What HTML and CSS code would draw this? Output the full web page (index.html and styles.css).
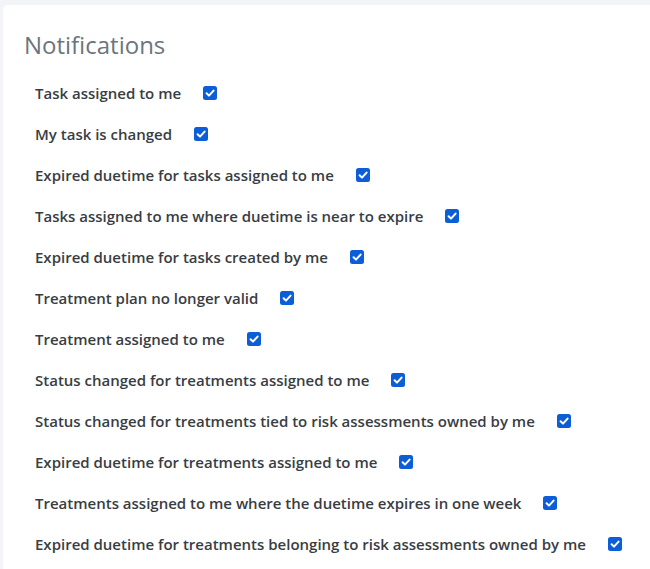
FILE: index.html
```html
<!DOCTYPE html>
<html>
<head>
<meta charset="utf-8">
<link rel="stylesheet" href="styles.css">
</head>
<body>
<div class="card">
  <h2 class="title">Notifications</h2>
  <ul class="list">
    <li class="row"><span class="label">Task assigned to me</span><span class="check"><svg viewBox="0 0 14 14" width="14" height="14"><rect width="14" height="14" rx="2.5" fill="#0b5ed7"/><path d="M3.6 7.2 L6 9.6 L10.6 4.6" fill="none" stroke="#fff" stroke-width="2" stroke-linecap="round" stroke-linejoin="round"/></svg></span></li>
    <li class="row"><span class="label">My task is changed</span><span class="check"><svg viewBox="0 0 14 14" width="14" height="14"><rect width="14" height="14" rx="2.5" fill="#0b5ed7"/><path d="M3.6 7.2 L6 9.6 L10.6 4.6" fill="none" stroke="#fff" stroke-width="2" stroke-linecap="round" stroke-linejoin="round"/></svg></span></li>
    <li class="row"><span class="label">Expired duetime for tasks assigned to me</span><span class="check"><svg viewBox="0 0 14 14" width="14" height="14"><rect width="14" height="14" rx="2.5" fill="#0b5ed7"/><path d="M3.6 7.2 L6 9.6 L10.6 4.6" fill="none" stroke="#fff" stroke-width="2" stroke-linecap="round" stroke-linejoin="round"/></svg></span></li>
    <li class="row"><span class="label">Tasks assigned to me where duetime is near to expire</span><span class="check"><svg viewBox="0 0 14 14" width="14" height="14"><rect width="14" height="14" rx="2.5" fill="#0b5ed7"/><path d="M3.6 7.2 L6 9.6 L10.6 4.6" fill="none" stroke="#fff" stroke-width="2" stroke-linecap="round" stroke-linejoin="round"/></svg></span></li>
    <li class="row"><span class="label">Expired duetime for tasks created by me</span><span class="check"><svg viewBox="0 0 14 14" width="14" height="14"><rect width="14" height="14" rx="2.5" fill="#0b5ed7"/><path d="M3.6 7.2 L6 9.6 L10.6 4.6" fill="none" stroke="#fff" stroke-width="2" stroke-linecap="round" stroke-linejoin="round"/></svg></span></li>
    <li class="row"><span class="label">Treatment plan no longer valid</span><span class="check"><svg viewBox="0 0 14 14" width="14" height="14"><rect width="14" height="14" rx="2.5" fill="#0b5ed7"/><path d="M3.6 7.2 L6 9.6 L10.6 4.6" fill="none" stroke="#fff" stroke-width="2" stroke-linecap="round" stroke-linejoin="round"/></svg></span></li>
    <li class="row"><span class="label">Treatment assigned to me</span><span class="check"><svg viewBox="0 0 14 14" width="14" height="14"><rect width="14" height="14" rx="2.5" fill="#0b5ed7"/><path d="M3.6 7.2 L6 9.6 L10.6 4.6" fill="none" stroke="#fff" stroke-width="2" stroke-linecap="round" stroke-linejoin="round"/></svg></span></li>
    <li class="row"><span class="label">Status changed for treatments assigned to me</span><span class="check"><svg viewBox="0 0 14 14" width="14" height="14"><rect width="14" height="14" rx="2.5" fill="#0b5ed7"/><path d="M3.6 7.2 L6 9.6 L10.6 4.6" fill="none" stroke="#fff" stroke-width="2" stroke-linecap="round" stroke-linejoin="round"/></svg></span></li>
    <li class="row"><span class="label">Status changed for treatments tied to risk assessments owned by me</span><span class="check"><svg viewBox="0 0 14 14" width="14" height="14"><rect width="14" height="14" rx="2.5" fill="#0b5ed7"/><path d="M3.6 7.2 L6 9.6 L10.6 4.6" fill="none" stroke="#fff" stroke-width="2" stroke-linecap="round" stroke-linejoin="round"/></svg></span></li>
    <li class="row"><span class="label">Expired duetime for treatments assigned to me</span><span class="check"><svg viewBox="0 0 14 14" width="14" height="14"><rect width="14" height="14" rx="2.5" fill="#0b5ed7"/><path d="M3.6 7.2 L6 9.6 L10.6 4.6" fill="none" stroke="#fff" stroke-width="2" stroke-linecap="round" stroke-linejoin="round"/></svg></span></li>
    <li class="row"><span class="label">Treatments assigned to me where the duetime expires in one week</span><span class="check"><svg viewBox="0 0 14 14" width="14" height="14"><rect width="14" height="14" rx="2.5" fill="#0b5ed7"/><path d="M3.6 7.2 L6 9.6 L10.6 4.6" fill="none" stroke="#fff" stroke-width="2" stroke-linecap="round" stroke-linejoin="round"/></svg></span></li>
    <li class="row"><span class="label">Expired duetime for treatments belonging to risk assessments owned by me</span><span class="check"><svg viewBox="0 0 14 14" width="14" height="14"><rect width="14" height="14" rx="2.5" fill="#0b5ed7"/><path d="M3.6 7.2 L6 9.6 L10.6 4.6" fill="none" stroke="#fff" stroke-width="2" stroke-linecap="round" stroke-linejoin="round"/></svg></span></li>
  </ul>
</div>
</body>
</html>
```
FILE: styles.css
```css
html, body {
  margin: 0;
  padding: 0;
  background: #f3f4f8;
  font-family: "Open Sans", "Noto Sans", sans-serif;
  height: 100%;
  overflow: hidden;
}
.card {
  margin: 5px 0 0 3px;
  background: #fff;
  border-radius: 5px 0 0 0;
  padding: 26px 0 0 21px;
  min-height: 600px;
}
.title {
  margin: 0;
  font-size: 24px;
  font-weight: 400;
  color: #6c757d;
  line-height: 28px;
}
.list {
  list-style: none;
  margin: 0;
  padding: 24px 0 0 11px;
  display: flex;
  flex-direction: column;
  gap: 21px;
}
.row {
  display: flex;
  align-items: center;
  gap: 22px;
  height: 20px;
}
.label {
  font-size: 15px;
  font-weight: 600;
  color: #383d43;
  white-space: nowrap;
}
.check {
  display: flex;
  width: 14px;
  height: 14px;
}
```
